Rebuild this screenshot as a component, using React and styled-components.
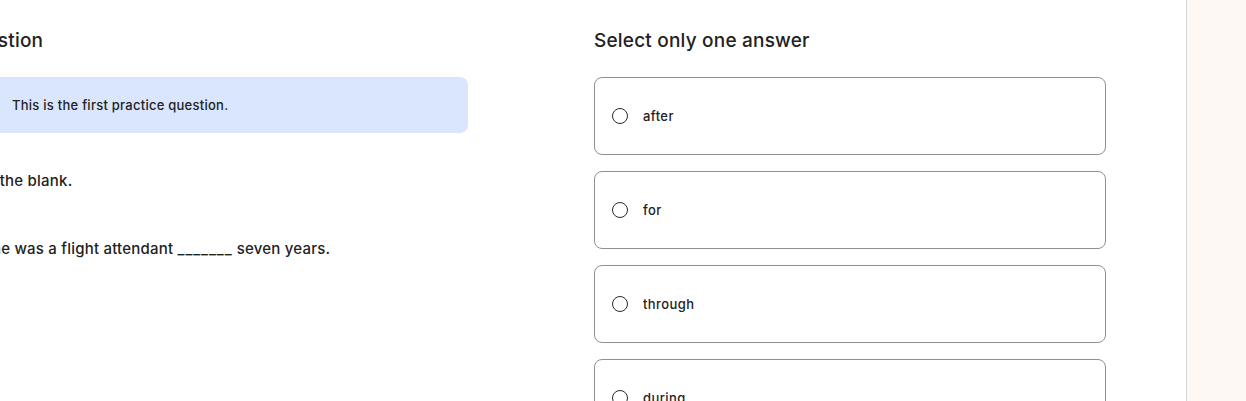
import React from 'react';
import styled, { createGlobalStyle } from 'styled-components';

const GlobalStyle = createGlobalStyle`
  html, body {
    margin: 0;
    padding: 0;
    background: #fff;
    overflow: hidden;
  }
  body {
    font-family: Inter, "Noto Sans", sans-serif;
    color: #222;
  }
`;

const Page = styled.div`
  display: flex;
  width: 1246px;
  height: 401px;
  overflow: hidden;
`;

const Main = styled.main`
  flex: 1;
  display: flex;
  align-items: flex-start;
  padding-top: 29px;
`;

const QuestionColumn = styled.section`
  width: 508px;
  margin-left: -40px;
  flex-shrink: 0;
`;

const AnswerColumn = styled.section`
  width: 512px;
  margin-left: 126px;
`;

const Heading = styled.h2`
  margin: 0 0 24px;
  font-size: 19px;
  font-weight: 500;
  line-height: 24px;
  letter-spacing: 0.2px;
  padding-left: ${p => p.$indent || 0}px;
`;

const Notice = styled.div`
  display: flex;
  align-items: center;
  height: 56px;
  padding-left: 52px;
  border-radius: 8px;
  background: #d9e6fd;
  font-size: 13px;
  font-weight: 500;
  letter-spacing: 0.25px;
`;

const Prompt = styled.p`
  margin: ${p => p.$top}px 0 0 ${p => p.$shift}px;
  font-size: 15px;
  font-weight: 500;
  line-height: 20px;
  letter-spacing: 0.22px;
`;

const Blank = styled.span`
  letter-spacing: 0.9px;
`;

const Options = styled.div`
  display: flex;
  flex-direction: column;
  gap: 16px;
`;

const Option = styled.label`
  display: flex;
  align-items: center;
  gap: 15px;
  height: 78px;
  box-sizing: border-box;
  padding-left: 17px;
  border: 1px solid #909090;
  border-radius: 8px;
  font-size: 13px;
  font-weight: 500;
  letter-spacing: 0.4px;
  line-height: 16px;
  padding-bottom: 1px;
  cursor: pointer;
`;

const Radio = styled.span`
  width: 16px;
  height: 16px;
  box-sizing: border-box;
  border: 1.5px solid #2a2a2a;
  border-radius: 50%;
  flex-shrink: 0;
`;

const SidePanel = styled.aside`
  width: 59px;
  flex-shrink: 0;
  border-left: 1px solid #d8d6d4;
  background: #fef8f4;
`;

const answers = ['after', 'for', 'through', 'during'];

export default function App() {
  return (
    <>
      <GlobalStyle />
      <Page>
        <Main>
          <QuestionColumn>
            <Heading $indent={-1}>Question</Heading>
            <Notice>This is the first practice question.</Notice>
            <Prompt $top={38} $shift={-3}>Fill in the blank.</Prompt>
            <Prompt $top={48} $shift={22}>
              She was a flight attendant <Blank>_______</Blank> seven years.
            </Prompt>
          </QuestionColumn>
          <AnswerColumn>
            <Heading>Select only one answer</Heading>
            <Options>
              {answers.map(a => (
                <Option key={a}>
                  <Radio />
                  {a}
                </Option>
              ))}
            </Options>
          </AnswerColumn>
        </Main>
        <SidePanel />
      </Page>
    </>
  );
}
